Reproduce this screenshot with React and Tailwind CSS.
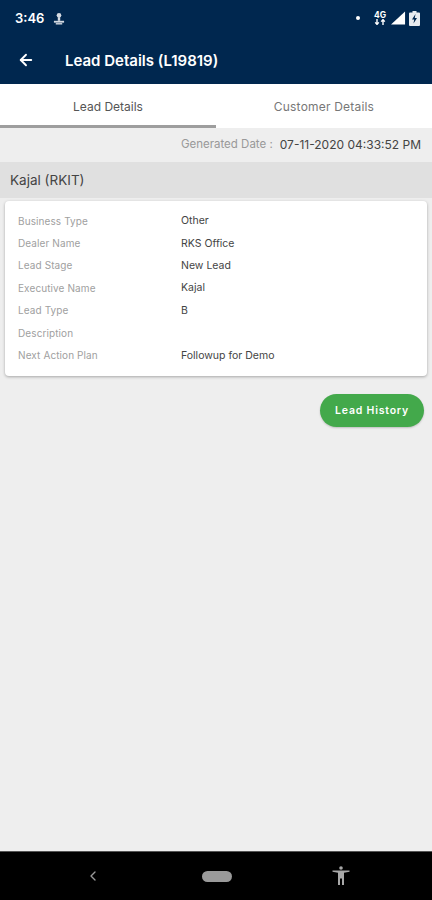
import { ArrowLeft, ChevronLeft } from 'lucide-react';

const rows = [
  ['Business Type', 'Other'],
  ['Dealer Name', 'RKS Office'],
  ['Lead Stage', 'New Lead'],
  ['Executive Name', 'Kajal'],
  ['Lead Type', 'B'],
  ['Description', ''],
  ['Next Action Plan', 'Followup for Demo'],
];

function StatusBar() {
  return (
    <div className="h-[36px] flex items-center justify-between pl-[15px] pr-[12px] text-white">
      <div className="flex items-center gap-[9px]">
        <span className="text-[13px] font-semibold leading-none">3:46</span>
        <svg width="12" height="13" viewBox="0 0 13 13" fill="#d5dbe3">
          <circle cx="6.5" cy="3" r="2.5" />
          <rect x="5.2" y="5" width="2.6" height="4" />
          <path d="M1 9h11v2H1z" />
          <path d="M3 11.500h7V13H3z" />
        </svg>
      </div>
      <div className="flex items-center">
        <div className="w-[4px] h-[4px] rounded-full bg-white mr-[13px]" />
        <div className="flex flex-col items-center mr-[4px] w-[14px]">
          <span className="text-[8.500px] font-bold leading-[8px]">4G</span>
          <svg width="12" height="6" viewBox="0 0 12 6" fill="none" stroke="#fff" strokeWidth="1.4">
            <path d="M3 0v5M1.2 3.4 3 5.4l1.8-2M9 6V1M7.2 2.6 9 .6l1.8 2" />
          </svg>
        </div>
        <svg width="15" height="14" viewBox="0 0 16 14" className="mr-[3px]">
          <path d="M0 14 15 0v14z" fill="#fff" />
        </svg>
        <svg width="11" height="15" viewBox="0 0 11 15">
          <path d="M3.500 0h4v1.500H10a1 1 0 0 1 1 1V14a1 1 0 0 1-1 1H1a1 1 0 0 1-1-1V2.500a1 1 0 0 1 1-1h2.500z" fill="#e8ebef" />
          <path d="M6.500 3 3 8.500h2.200L4.500 12.500 8 7H5.800z" fill="#00274f" />
        </svg>
      </div>
    </div>
  );
}

function NavBar() {
  return (
    <div className="h-[49px] bg-black border-t border-[#555] flex items-center justify-between pl-[85px] pr-[82px] shrink-0">
      <ChevronLeft size={16} strokeWidth={2} className="text-[#9a9a9a]" />
      <div className="w-[30px] h-[11px] rounded-full bg-[#9a9a9a]" />
      <svg width="18" height="20" viewBox="0 0 18 20" fill="#a8a8a8">
        <circle cx="9" cy="2" r="1.800" />
        <path d="M0.500 4.500h17v1.300l-5.500 1V19h-2v-6.500H8V19H6V6.800L0.500 5.800z" />
      </svg>
    </div>
  );
}

export default function App() {
  return (
    <div className="w-[432px] h-[900px] flex flex-col bg-[#eeeeee] overflow-hidden" style={{ fontFamily: 'Inter, "Liberation Sans", sans-serif' }}>
      <div className="h-[84px] bg-[#00274f] shrink-0">
        <StatusBar />
        <div className="h-[48px] flex items-center pl-[17px]">
          <ArrowLeft size={18} strokeWidth={2.500} className="text-white" />
          <span className="ml-[30px] text-[15px] font-semibold text-white leading-none">Lead Details (L19819)</span>
        </div>
      </div>

      <div className="h-[44px] bg-white flex shrink-0">
        <div className="w-1/2 flex items-center justify-center border-b-[3px] border-[#9e9e9e] pt-[4px] text-[12px] text-[#555]">Lead Details</div>
        <div className="w-1/2 flex items-center justify-center pt-[4px] pb-[3px] text-[12px] tracking-[0.2px] text-[#777]">Customer Details</div>
      </div>

      <div className="h-[34px] flex items-center justify-end pr-[11px] pb-[1px] shrink-0">
        <span className="text-[11.500px] text-[#999]">Generated Date :</span>
        <span className="ml-[7px] text-[12px] text-[#444]">07-11-2020 04:33:52 PM</span>
      </div>

      <div className="h-[36px] bg-[#e0e0e0] flex items-center pl-[10px] text-[13.500px] text-[#444] shrink-0">Kajal (RKIT)</div>

      <div className="mx-[5px] mt-[3px] h-[175px] bg-white rounded-[4px] shadow-[0_1px_3px_rgba(0,0,0,0.3)] pt-[9px] pl-[13px] shrink-0">
        {rows.map(([label, value]) => (
          <div key={label} className="h-[22.400px] flex items-center">
            <span className="w-[163px] text-[10px] tracking-[0.1px] text-[#a0a0a0]">{label}</span>
            <span className="text-[10.500px] text-[#444]">{value}</span>
          </div>
        ))}
      </div>

      <div className="flex justify-end pr-[8px] mt-[18px] shrink-0">
        <button className="w-[104px] h-[33px] rounded-full bg-[#43a94b] text-white text-[10.500px] font-semibold tracking-[0.8px] shadow-[0_1px_2px_rgba(0,0,0,0.2)]">Lead History</button>
      </div>

      <div className="flex-1" />
      <NavBar />
    </div>
  );
}
